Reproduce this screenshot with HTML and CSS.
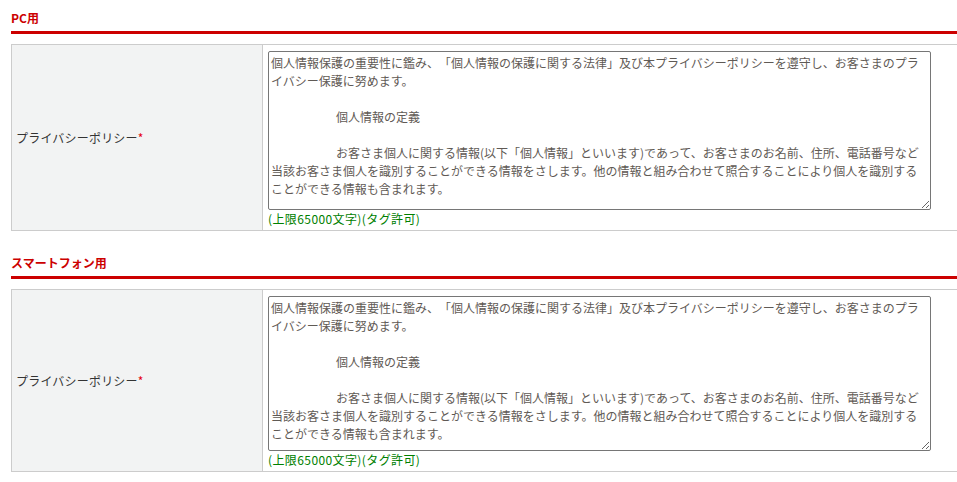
FILE: index.html
```html
<!DOCTYPE html>
<html lang="ja">
<head>
<meta charset="utf-8">
<title>プライバシーポリシー</title>
<link rel="stylesheet" href="styles.css">
</head>
<body>
<div class="page">
  <section class="block">
    <h2 class="block-title">PC用</h2>
    <table class="form-table">
      <tr>
        <th class="label">プライバシーポリシー<span class="req">*</span></th>
        <td class="field">
          <textarea class="policy">個人情報保護の重要性に鑑み、「個人情報の保護に関する法律」及び本プライバシーポリシーを遵守し、お客さまのプライバシー保護に努めます。

&#9;個人情報の定義

&#9;お客さま個人に関する情報(以下「個人情報」といいます)であって、お客さまのお名前、住所、電話番号など当該お客さま個人を識別することができる情報をさします。他の情報と組み合わせて照合することにより個人を識別することができる情報も含まれます。</textarea>
          <div class="note">(上限65000文字)(タグ許可)</div>
        </td>
      </tr>
    </table>
  </section>
  <section class="block block-next">
    <h2 class="block-title">スマートフォン用</h2>
    <table class="form-table">
      <tr>
        <th class="label">プライバシーポリシー<span class="req">*</span></th>
        <td class="field">
          <textarea class="policy policy-sp">個人情報保護の重要性に鑑み、「個人情報の保護に関する法律」及び本プライバシーポリシーを遵守し、お客さまのプライバシー保護に努めます。

&#9;個人情報の定義

&#9;お客さま個人に関する情報(以下「個人情報」といいます)であって、お客さまのお名前、住所、電話番号など当該お客さま個人を識別することができる情報をさします。他の情報と組み合わせて照合することにより個人を識別することができる情報も含まれます。</textarea>
          <div class="note">(上限65000文字)(タグ許可)</div>
        </td>
      </tr>
    </table>
  </section>
</div>
</body>
</html>
```

FILE: styles.css
```css
html, body {
  margin: 0;
  padding: 0;
  background: #fff;
}

body {
  font-family: "Noto Sans CJK JP", "Noto Sans", sans-serif;
  font-size: 12px;
  color: #333;
  text-spacing-trim: space-all;
}

.page {
  padding: 9px 0 0 11px;
}

.block-next {
  margin-top: 23px;
}

.block-title {
  margin: 0 0 10px;
  padding: 0 0 4px;
  font-size: 12px;
  line-height: 18px;
  font-weight: bold;
  color: #cc0000;
  border-bottom: 3px solid #cc0000;
}

.form-table {
  width: 100%;
  border-collapse: separate;
  border-spacing: 0;
  border-top: 1px solid #cccccc;
  border-left: 1px solid #cccccc;
}

.form-table th,
.form-table td {
  border-bottom: 1px solid #cccccc;
}

.label {
  width: 246px;
  padding: 0 0 0 4px;
  border-right: 1px solid #cccccc;
  background: #f2f3f3;
  text-align: left;
  font-weight: normal;
  vertical-align: middle;
  line-height: 18px;
  color: #333;
  letter-spacing: 0.2px;
}

.req {
  color: #e60012;
}

.field {
  padding: 6px 5px 3px 5px;
  vertical-align: top;
}

.policy {
  display: block;
  box-sizing: border-box;
  width: 663px;
  height: 159px;
  margin: 0;
  padding: 2px;
  border: 1px solid #767676;
  border-radius: 2px;
  font-family: "Noto Sans CJK JP", "Noto Sans", sans-serif;
  font-size: 12px;
  line-height: 18px;
  color: #5f5a55;
  tab-size: 65px;
  -moz-tab-size: 65px;
  text-spacing-trim: space-all;
  overflow: auto;
}

.policy-sp {
  height: 155px;
}

.note {
  font-size: 12px;
  line-height: 17px;
  color: #008000;
  letter-spacing: 0.4px;
}
```
